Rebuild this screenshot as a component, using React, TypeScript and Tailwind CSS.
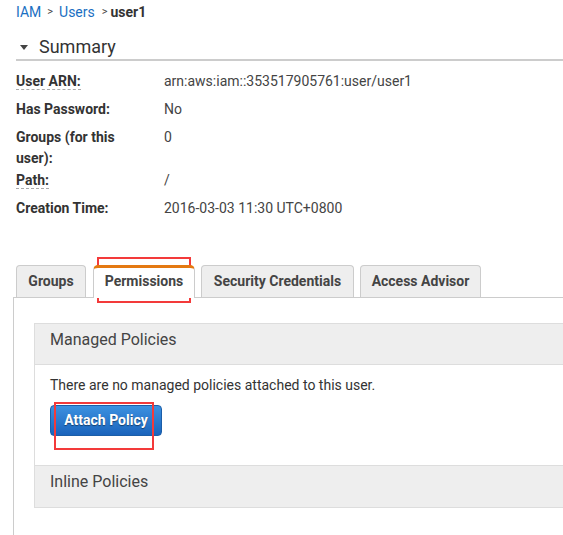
import React from "react";

const rows: { label: string; value: string; dashed?: boolean; h: string }[] = [
  { label: "User ARN:", value: "arn:aws:iam::353517905761:user/user1", dashed: true, h: "h-[28px]" },
  { label: "Has Password:", value: "No", h: "h-[28px]" },
  { label: "Groups (for this user):", value: "0", h: "h-[43px]" },
  { label: "Path:", value: "/", dashed: true, h: "h-[28px]" },
  { label: "Creation Time:", value: "2016-03-03 11:30 UTC+0800", h: "h-[28px]" },
];

export default function App() {
  return (
    <div
      className="relative w-[563px] h-[535px] overflow-hidden bg-white text-[#333]"
      style={{ fontFamily: "Roboto, 'Liberation Sans', Arial, sans-serif" }}
    >
      <div className="w-[640px] pl-[16px] pt-[2px]">
        {/* Breadcrumb */}
        <div className="h-[20px] leading-[20px] text-[14px] flex items-center">
          <span className="text-[#1a6fc2]">IAM</span>
          <span className="text-[11px] text-[#444] mx-[6px]">&gt;</span>
          <span className="text-[#1a6fc2]">Users</span>
          <span className="text-[11px] text-[#444] ml-[7px] mr-[3px]">&gt;</span>
          <span className="font-bold text-[#333]">user1</span>
        </div>

        {/* Summary header */}
        <div className="mt-[13px] h-[26px] border-b-2 border-[#ccc] flex items-start">
          <div className="h-[24px] flex items-center">
            <svg width="8" height="5" viewBox="0 0 8 5" className="ml-[4px] mr-[11px]">
              <path d="M0 0 L8 0 L4 5 Z" fill="#444" />
            </svg>
            <span className="text-[18px] leading-[24px] text-[#333]">Summary</span>
          </div>
        </div>

        {/* Summary rows */}
        <div className="mt-[10px] text-[14px] leading-[21px]">
          {rows.map((r) => (
            <div key={r.label} className={`flex ${r.h}`}>
              <div className="w-[148px] pr-[20px] font-bold text-[#333]">
                {r.dashed ? (
                  <span className="border-b border-dashed border-[#aaa]">{r.label}</span>
                ) : (
                  r.label
                )}
              </div>
              <div className="text-[#444]">{r.value}</div>
            </div>
          ))}
        </div>

        {/* Tabs */}
        <div className="mt-[39px] -ml-[3px]">
          <div className="flex items-end pl-[3px] h-[32px] gap-[6px] text-[14px] font-bold text-[#444]">
            <div className="h-[32px] w-[70px] flex items-center justify-center bg-[#eee] border border-b-0 border-[#ccc] rounded-t-[4px]">
              Groups
            </div>
            <div className="relative z-10 h-[33px] -mb-[1px] ml-[1px] w-[102px] flex items-center justify-center bg-white border-x border-[#ccc] border-t-[3px] border-t-[#e47911] rounded-t-[5px] pb-[3px]">
              Permissions
            </div>
            <div className="h-[32px] w-[153px] flex items-center justify-center bg-[#eee] border border-b-0 border-[#ccc] rounded-t-[4px]">
              Security Credentials
            </div>
            <div className="h-[32px] w-[121px] flex items-center justify-center bg-[#eee] border border-b-0 border-[#ccc] rounded-t-[4px]">
              Access Advisor
            </div>
          </div>

          {/* Tab content */}
          <div className="border-l border-t border-[#ccc] h-[300px] pt-[25px] pl-[20px]">
            <div className="border border-[#ddd]">
              <div className="h-[41px] bg-[#eee] border-b border-[#ddd] pl-[15px] pt-[6px] leading-[20px] text-[16px] text-[#444]">
                Managed Policies
              </div>
              <div className="pl-[15px] pt-[10px] h-[100px]">
                <div className="text-[14px] leading-[20px] text-[#333]">
                  There are no managed policies attached to this user.
                </div>
                <button
                  className="mt-[10px] h-[31px] w-[112px] rounded-[4px] border border-[#1b5ea8] bg-gradient-to-b from-[#3c91e0] to-[#1a64bc] text-white text-[14px] font-bold"
                  style={{ textShadow: "0 1px 1px rgba(0,0,0,0.45)" }}
                >
                  Attach Policy
                </button>
              </div>
              <div className="h-[42px] bg-[#eee] border-t border-[#ddd] pl-[15px] pt-[6px] leading-[20px] text-[16px] text-[#444]">
                Inline Policies
              </div>
            </div>
          </div>
        </div>
      </div>

      {/* Red annotation boxes */}
      <div className="absolute left-[97px] top-[257px] w-[94px] h-[46px] border-2 border-[#f33a3a] pointer-events-none" />
      <div className="absolute left-[54px] top-[402px] w-[100px] h-[48px] border-2 border-[#f33a3a] pointer-events-none" />
    </div>
  );
}
